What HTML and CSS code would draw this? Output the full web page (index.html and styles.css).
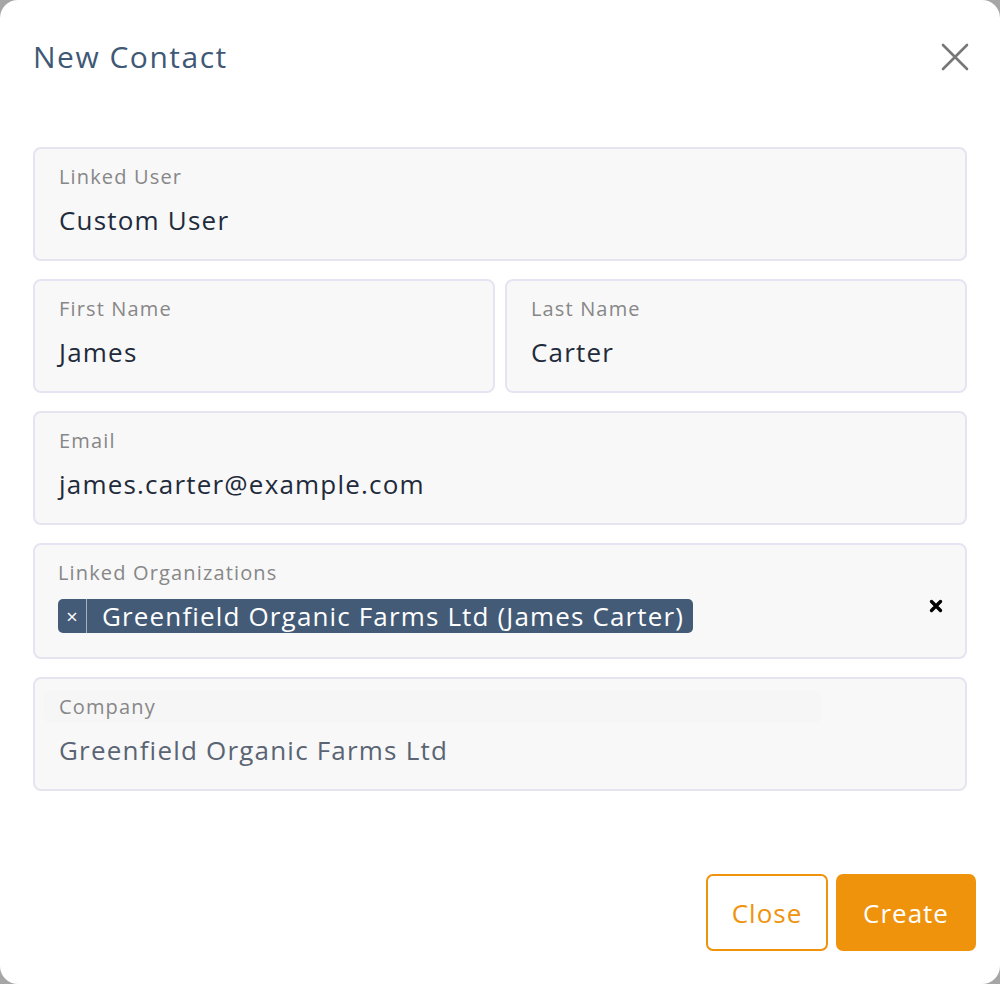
FILE: index.html
```html
<!DOCTYPE html>
<html lang="en">
<head>
<meta charset="utf-8">
<title>New Contact</title>
<link rel="stylesheet" href="styles.css">
</head>
<body>
<div class="dialog">
  <header class="dialog-header">
    <h1 class="dialog-title">New Contact</h1>
    <button class="icon-close" aria-label="Close">
      <svg width="30" height="30" viewBox="0 0 30 30"><path d="M3 3 L27 27 M27 3 L3 27" stroke="#777" stroke-width="2.6" stroke-linecap="round" fill="none"/></svg>
    </button>
  </header>
  <div class="dialog-body">
    <div class="field">
      <div class="field-label">Linked User</div>
      <div class="field-value">Custom User</div>
    </div>
    <div class="field-row">
      <div class="field">
        <div class="field-label">First Name</div>
        <div class="field-value">James</div>
      </div>
      <div class="field">
        <div class="field-label">Last Name</div>
        <div class="field-value">Carter</div>
      </div>
    </div>
    <div class="field">
      <div class="field-label">Email</div>
      <div class="field-value">james.carter@example.com</div>
    </div>
    <div class="field field-multi">
      <div class="field-label">Linked Organizations</div>
      <div class="tag-row">
        <span class="tag"><span class="tag-remove">×</span><span class="tag-text">Greenfield Organic Farms Ltd (James Carter)</span></span>
        <span class="clear-all">
          <svg width="14" height="14" viewBox="0 0 14 14"><path d="M2.5 2.5 L11.5 11.5 M11.5 2.5 L2.5 11.5" stroke="#000" stroke-width="3.4" stroke-linecap="round" fill="none"/></svg>
        </span>
      </div>
    </div>
    <div class="field field-disabled">
      <div class="field-label">Company</div>
      <div class="field-value">Greenfield Organic Farms Ltd</div>
    </div>
  </div>
  <footer class="dialog-footer">
    <button class="btn btn-outline">Close</button>
    <button class="btn btn-primary">Create</button>
  </footer>
</div>
</body>
</html>
```
FILE: styles.css
```css
* { box-sizing: border-box; }
html, body { margin: 0; height: 100%; }
body {
  background: #a6a6a6;
  font-family: "Open Sans", Lato, sans-serif;
}
.dialog {
  width: 1000px;
  height: 984px;
  background: #fff;
  border-radius: 18px;
  display: flex;
  flex-direction: column;
}
.dialog-header {
  display: flex;
  justify-content: space-between;
  padding: 38px 30px 0 33px;
  height: 147px;
  align-items: flex-start;
}
.dialog-title {
  margin: 0;
  font-size: 30px;
  font-weight: 400;
  letter-spacing: 1.5px;
  line-height: 38px;
  color: #3f5875;
}
.icon-close {
  background: none;
  border: 0;
  padding: 0;
  margin-top: 4px;
  width: 30px;
  height: 30px;
  cursor: pointer;
}
.icon-close svg { display: block; }
.dialog-body {
  padding: 0 33px;
  display: flex;
  flex-direction: column;
  gap: 18px;
}
.field-row {
  display: flex;
  gap: 10px;
}
.field-row .field { flex: 1; }
.field {
  background: #f8f8f9;
  border: 2px solid #e4e5f0;
  border-radius: 8px;
  padding: 16px 24px 21px;
  height: 114px;
}
.field-label {
  font-size: 20px;
  letter-spacing: 1.15px;
  line-height: 24px;
  color: #878787;
}
.field-value {
  margin-top: 13px;
  font-size: 26px;
  letter-spacing: 1.2px;
  line-height: 36px;
  color: #1f2b3b;
}
.field-multi {
  height: 116px;
  padding-right: 22px;
  padding-left: 23px;
}
.tag-row {
  margin-top: 14px;
  display: flex;
  justify-content: space-between;
  align-items: flex-start;
}
.tag {
  display: inline-flex;
  align-items: stretch;
  height: 34px;
  background: #435b77;
  border-radius: 5px;
  color: #fff;
  overflow: hidden;
}
.tag-remove {
  width: 29px;
  display: flex;
  align-items: center;
  justify-content: center;
  font-size: 20px;
  border-right: 1px solid #a9b2bf;
}
.tag-text {
  padding: 0 9px 0 15px;
  font-size: 26px;
  letter-spacing: 1.15px;
  line-height: 34px;
}
.clear-all {
  display: block;
}
.clear-all svg { display: block; }
.field-disabled .field-label {
  background: #f6f6f7;
  margin: -4px -15px 0;
  padding: 4px 15px;
  border-radius: 6px;
  width: 777px;
}
.field-disabled .field-value {
  margin-top: 9px;
  color: #5a6473;
}
.dialog-footer {
  margin-top: auto;
  display: flex;
  justify-content: flex-end;
  gap: 8px;
  padding: 0 24px 33px;
}
.btn {
  height: 77px;
  border-radius: 7px;
  font-family: inherit;
  font-size: 26px;
  letter-spacing: 1px;
  cursor: pointer;
}
.btn-outline {
  width: 122px;
  background: #fff;
  border: 2px solid #f0930c;
  color: #f0930c;
}
.btn-primary {
  width: 140px;
  background: #f0930c;
  border: 0;
  color: #fff;
}
```
